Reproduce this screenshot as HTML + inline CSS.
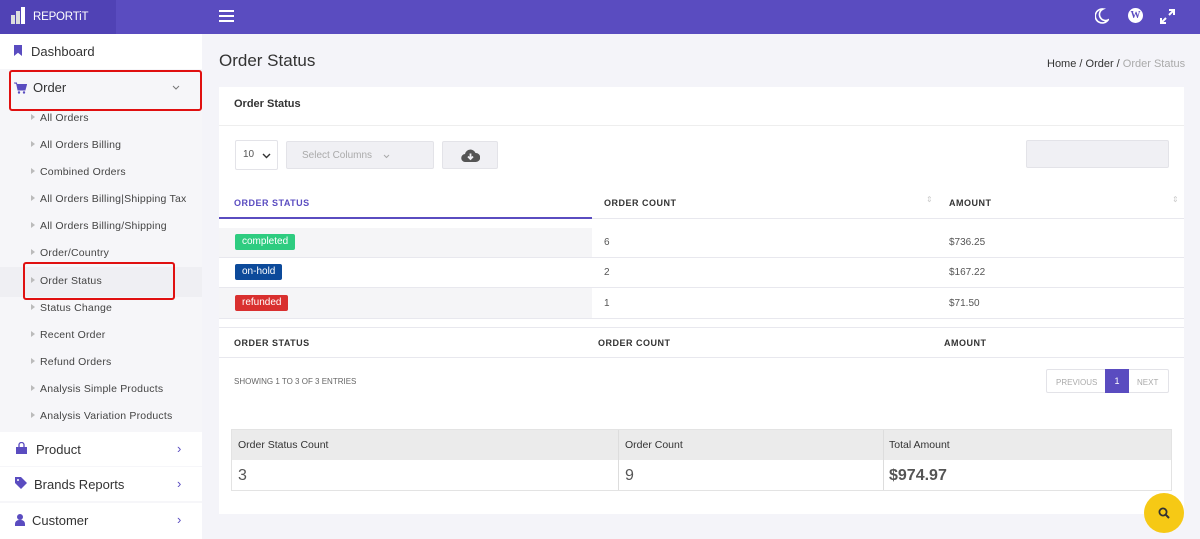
<!DOCTYPE html>
<html><head><meta charset="utf-8"><style>
*{box-sizing:border-box;margin:0;padding:0}
body{width:1200px;height:539px;overflow:hidden;font-family:"Liberation Sans",Arial,sans-serif;background:#f4f4f9;position:relative;color:#333}
.top{position:absolute;left:0;top:0;width:1200px;height:34px;background:#5a4cc0}
.logo{position:absolute;left:0;top:0;width:116px;height:34px;background:#5042b5}
.side{position:absolute;left:0;top:34px;width:202px;height:505px;background:#f6f6f9}
.abs{position:absolute}
.sub{position:absolute;left:40px;font-size:10.5px;color:#444;letter-spacing:.2px}
.tri{position:absolute;left:31px;width:0;height:0;border-left:4px solid #bbb;border-top:3.5px solid transparent;border-bottom:3.5px solid transparent}
.card{position:absolute;left:219px;top:87px;width:965px;height:427px;background:#fff}
.th{position:absolute;font-size:9px;font-weight:bold;letter-spacing:.5px;color:#333}
.badge{position:absolute;left:16px;height:16px;line-height:16px;font-size:10px;color:#fff;padding:0 7px;border-radius:2px}
.cell{position:absolute;font-size:10px;color:#555}
.hl{position:absolute;height:1px;background:#e8e8ee}
.menu{position:absolute;left:0;width:202px;background:#fff;height:34px;font-size:13px;color:#333}
</style></head><body>
<div class="top"></div>
<div class="logo">
 <div class="abs" style="left:11px;top:15px;width:4px;height:9px;background:#ddd"></div>
 <div class="abs" style="left:16px;top:11px;width:4px;height:13px;background:#ddd"></div>
 <div class="abs" style="left:21px;top:7px;width:4px;height:17px;background:#fff"></div>
 <div class="abs" style="left:33px;top:11px;color:#fff;font-size:11.5px;letter-spacing:-.2px">REPORTiT</div>
</div>
<div class="abs" style="left:219px;top:10px;width:15px;height:2px;background:#fff;box-shadow:0 5px 0 #fff,0 10px 0 #fff"></div>
<svg class="abs" style="left:1095px;top:8px" width="14" height="16" viewBox="0 0 14 16"><path d="M8 1 A7 7 0 1 0 13 12 A6 6 0 0 1 8 1 Z" fill="none" stroke="#fff" stroke-width="1.6"/></svg>
<div class="abs" style="left:1128px;top:8px;width:15px;height:15px;border-radius:50%;background:#fff;color:#5a4cc0;font-size:10px;font-weight:bold;text-align:center;line-height:15px;font-family:'Liberation Serif',serif">W</div>
<svg class="abs" style="left:1160px;top:9px" width="15" height="15" viewBox="0 0 15 15"><path d="M9 1h5v5M14 1L9 6M6 14H1V9M1 14l5-5" fill="none" stroke="#fff" stroke-width="2"/></svg>

<div class="side">
 <div class="menu" style="top:0;height:35px"><div class="abs" style="left:14px;top:11px;width:8px;height:11px;background:#5a4cc0;clip-path:polygon(0 0,100% 0,100% 100%,50% 70%,0 100%)"></div><span class="abs" style="left:31px;top:10px">Dashboard</span></div>
 <div class="abs" style="left:9px;top:36px;width:193px;height:41px;border:2px solid #e01010;border-radius:3px"></div>
 <svg class="abs" style="left:14px;top:48px" width="13" height="12" viewBox="0 0 13 12"><path d="M0 1h2.5l1.5 7h7l1.5-5.5H3.2" fill="#5a4cc0" stroke="#5a4cc0" stroke-width="1"/><circle cx="5" cy="10.5" r="1.2" fill="#5a4cc0"/><circle cx="10" cy="10.5" r="1.2" fill="#5a4cc0"/></svg>
 <div class="abs" style="left:33px;top:46px;font-size:13px">Order</div>
 <svg class="abs" style="left:172px;top:51px" width="8" height="5" viewBox="0 0 8 5"><path d="M1 1l3 3 3-3" fill="none" stroke="#777" stroke-width="1"/></svg>
 <div class="tri" style="top:80px"></div><div class="sub" style="top:78px">All Orders</div>
 <div class="tri" style="top:107px"></div><div class="sub" style="top:105px">All Orders Billing</div>
 <div class="tri" style="top:134px"></div><div class="sub" style="top:132px">Combined Orders</div>
 <div class="tri" style="top:161px"></div><div class="sub" style="top:159px">All Orders Billing|Shipping Tax</div>
 <div class="tri" style="top:188px"></div><div class="sub" style="top:186px">All Orders Billing/Shipping</div>
 <div class="tri" style="top:215px"></div><div class="sub" style="top:213px">Order/Country</div>
 <div class="abs" style="left:0;top:233px;width:202px;height:30px;background:#efeff3"></div>
 <div class="abs" style="left:23px;top:228px;width:152px;height:38px;border:2px solid #e01010;border-radius:3px"></div>
 <div class="tri" style="top:243px"></div><div class="sub" style="top:241px">Order Status</div>
 <div class="tri" style="top:270px"></div><div class="sub" style="top:268px">Status Change</div>
 <div class="tri" style="top:297px"></div><div class="sub" style="top:295px">Recent Order</div>
 <div class="tri" style="top:324px"></div><div class="sub" style="top:322px">Refund Orders</div>
 <div class="tri" style="top:351px"></div><div class="sub" style="top:349px">Analysis Simple Products</div>
 <div class="tri" style="top:378px"></div><div class="sub" style="top:376px">Analysis Variation Products</div>
 <div class="menu" style="top:398px;height:34px"><svg class="abs" style="left:15px;top:10px" width="13" height="13" viewBox="0 0 13 13"><path d="M4 5V3a2.5 2.5 0 0 1 5 0v2" fill="none" stroke="#5a4cc0" stroke-width="1.3"/><rect x="1" y="5" width="11" height="7" fill="#5a4cc0"/></svg><span class="abs" style="left:36px;top:10px">Product</span><span class="abs" style="left:177px;top:9px;color:#5a4cc0">›</span></div>
 <div class="menu" style="top:433px;height:34px"><svg class="abs" style="left:15px;top:10px" width="12" height="12" viewBox="0 0 12 12"><path d="M0 0h6l6 6-6 6-6-6z" fill="#5a4cc0"/><circle cx="3" cy="3" r="1" fill="#fff"/></svg><span class="abs" style="left:34px;top:10px">Brands Reports</span><span class="abs" style="left:177px;top:9px;color:#5a4cc0">›</span></div>
 <div class="menu" style="top:469px;height:36px"><div class="abs" style="left:17px;top:11px;width:6px;height:6px;border-radius:50%;background:#5a4cc0"></div><div class="abs" style="left:15px;top:17px;width:10px;height:6px;border-radius:4px 4px 0 0;background:#5a4cc0"></div><span class="abs" style="left:32px;top:10px">Customer</span><span class="abs" style="left:177px;top:9px;color:#5a4cc0">›</span></div>
</div>

<div class="abs" style="left:219px;top:51px;font-size:17px;color:#333">Order Status</div>
<div class="abs" style="left:1047px;top:58px;font-size:11px;color:#333">Home / Order / <span style="color:#aaa">Order Status</span></div>

<div class="card">
 <div class="abs" style="left:15px;top:11px;font-size:11px;font-weight:bold">Order Status</div>
 <div class="hl" style="left:0;top:38px;width:965px;background:#eee"></div>
 <div class="abs" style="left:16px;top:53px;width:43px;height:30px;border:1px solid #e3e3e8;border-radius:2px;font-size:10px;color:#555;white-space:nowrap">
  <span class="abs" style="left:7px;top:8px">10</span>
  <svg class="abs" style="left:26px;top:12px" width="9" height="6" viewBox="0 0 9 6"><path d="M1 1l3.5 3.5L8 1" fill="none" stroke="#333" stroke-width="1.4"/></svg>
 </div>
 <div class="abs" style="left:67px;top:54px;width:148px;height:28px;background:#f0f0f4;border:1px solid #e3e3e8;border-radius:2px;font-size:10px;color:#aaa;white-space:nowrap"><span class="abs" style="left:15px;top:8px">Select Columns</span>
  <svg class="abs" style="left:96px;top:12px" width="7" height="5" viewBox="0 0 7 5"><path d="M1 1l2.5 2.5L6 1" fill="none" stroke="#aaa" stroke-width="1"/></svg></div>
 <div class="abs" style="left:223px;top:54px;width:56px;height:28px;background:#f0f0f4;border:1px solid #e3e3e8;border-radius:2px">
  <svg class="abs" style="left:18px;top:7px" width="19" height="13" viewBox="0 0 19 13"><path d="M4.5 13A4 4 0 0 1 4 5a5.5 5.5 0 0 1 10.5-1A4.5 4.5 0 0 1 15 13z" fill="#555"/><path d="M9.5 4.5v5M7 7.5l2.5 2.5 2.5-2.5" fill="none" stroke="#f0f0f4" stroke-width="1.8"/></svg>
 </div>
 <div class="abs" style="left:807px;top:53px;width:143px;height:28px;background:#f0f0f4;border:1px solid #e3e3e8;border-radius:2px"></div>
 <div class="th" style="left:15px;top:111px;color:#5a4cc0">ORDER STATUS</div>
 <div class="th" style="left:385px;top:111px">ORDER COUNT</div>
 <div class="th" style="left:730px;top:111px">AMOUNT</div>
 <div class="abs" style="left:707px;top:108px;font-size:8px;color:#ccc">⇕</div>
 <div class="abs" style="left:953px;top:108px;font-size:8px;color:#ccc">⇕</div>
 <div class="abs" style="left:0;top:130px;width:373px;height:2px;background:#5a4cc0"></div>
 <div class="hl" style="left:373px;top:131px;width:592px"></div>
 <div class="abs" style="left:0;top:141px;width:373px;height:30px;background:#f5f5f7"></div>
 <div class="hl" style="left:0;top:170px;width:965px"></div>
 <div class="abs" style="left:0;top:201px;width:373px;height:30px;background:#f5f5f7"></div>
 <div class="hl" style="left:0;top:200px;width:965px"></div>
 <div class="hl" style="left:0;top:231px;width:965px"></div>
 <div class="badge" style="top:147px;background:#2ecc80">completed</div>
 <div class="badge" style="top:177px;background:#0c4a9a">on-hold</div>
 <div class="badge" style="top:208px;background:#d9302f">refunded</div>
 <div class="cell" style="left:385px;top:150px">6</div><div class="cell" style="left:730px;top:150px">$736.25</div>
 <div class="cell" style="left:385px;top:180px">2</div><div class="cell" style="left:730px;top:180px">$167.22</div>
 <div class="cell" style="left:385px;top:211px">1</div><div class="cell" style="left:730px;top:211px">$71.50</div>
 <div class="hl" style="left:0;top:240px;width:965px"></div>
 <div class="th" style="left:15px;top:251px">ORDER STATUS</div>
 <div class="th" style="left:379px;top:251px">ORDER COUNT</div>
 <div class="th" style="left:725px;top:251px">AMOUNT</div>
 <div class="hl" style="left:0;top:270px;width:965px"></div>
 <div class="abs" style="left:15px;top:290px;font-size:8px;color:#666">SHOWING 1 TO 3 OF 3 ENTRIES</div>
 <div class="abs" style="left:827px;top:282px;width:123px;height:24px;border:1px solid #e3e3e8;border-radius:2px;font-size:8px;color:#aaa">
  <span class="abs" style="left:9px;top:8px">PREVIOUS</span>
  <div class="abs" style="left:58px;top:-1px;width:24px;height:24px;background:#5a4cc0;color:#fff;text-align:center;line-height:24px;font-size:9px">1</div>
  <span class="abs" style="left:90px;top:8px">NEXT</span>
 </div>
 <div class="abs" style="left:12px;top:342px;width:941px;height:62px;border:1px solid #e3e3e3">
  <div class="abs" style="left:0;top:0;width:939px;height:30px;background:#ebebeb"></div>
  <div class="abs" style="left:386px;top:0;width:1px;height:60px;background:#ddd"></div>
  <div class="abs" style="left:651px;top:0;width:1px;height:60px;background:#ddd"></div>
  <span class="abs" style="left:6px;top:9px;font-size:10.5px;color:#333">Order Status Count</span>
  <span class="abs" style="left:393px;top:9px;font-size:10.5px;color:#333">Order Count</span>
  <span class="abs" style="left:657px;top:9px;font-size:10.5px;color:#333">Total Amount</span>
  <span class="abs" style="left:6px;top:37px;font-size:16px;color:#555">3</span>
  <span class="abs" style="left:393px;top:37px;font-size:16px;color:#555">9</span>
  <span class="abs" style="left:657px;top:37px;font-size:16px;color:#555;font-weight:bold">$974.97</span>
 </div>
</div>
<div class="abs" style="left:1144px;top:493px;width:40px;height:40px;border-radius:50%;background:#f6c915">
 <svg class="abs" style="left:14px;top:14px" width="12" height="12" viewBox="0 0 12 12"><circle cx="5" cy="5" r="3.6" fill="none" stroke="#333" stroke-width="1.8"/><path d="M7.6 7.6L11 11" stroke="#333" stroke-width="2"/></svg>
</div>
</body></html>
